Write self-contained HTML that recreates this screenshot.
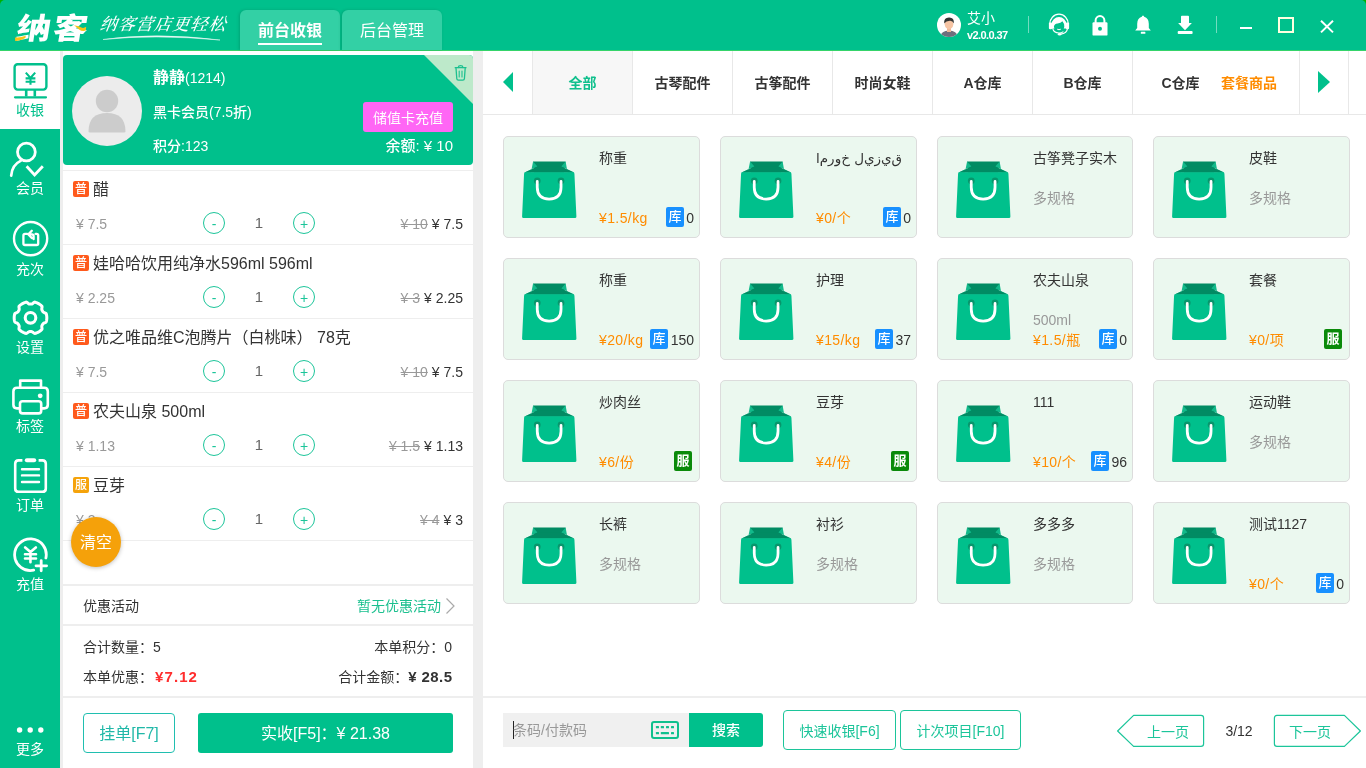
<!DOCTYPE html>
<html lang="zh-CN">
<head>
<meta charset="utf-8">
<title>纳客 前台收银</title>
<style>
*{box-sizing:border-box;margin:0;padding:0}
html,body{width:1366px;height:768px;overflow:hidden}
html{background:#eee}
body{position:relative;background:#eee;font-family:"Liberation Sans","Noto Sans CJK SC",sans-serif;font-size:14px;color:#333;line-height:1}
#root{position:absolute;left:0;top:0;width:1366px;height:768px;will-change:transform}
.abs{position:absolute}
.t{position:absolute;white-space:nowrap;line-height:20px;height:20px}
/* header */
#hdr{position:absolute;left:0;top:0;width:1366px;height:51px;background:#00c08c;border-bottom:1px solid #35d46a;border-radius:5px 5px 0 0}
.htab{position:absolute;top:10px;width:100px;height:40px;background:#33d0a5;border-radius:6px 6px 0 0;box-shadow:-1px 0 3px rgba(0,70,45,.22);color:#fff;font-size:16px;text-align:center;line-height:42px}
/* sidebar */
#side{position:absolute;left:0;top:51px;width:60px;height:717px;background:#00c08c}
.sitem{position:absolute;left:0;width:60px;height:79px;color:#fff;text-align:center}
.sitem .lb{position:absolute;left:0;width:60px;text-align:center;font-size:14px;line-height:20px;top:49px}
.sitem svg{position:absolute;left:0;top:0}
/* left panel */
#lp{position:absolute;left:63px;top:51px;width:410px;height:717px;background:#fff}
#card{position:absolute;left:0;top:4px;width:410px;height:110px;background:#00c08c;border-radius:4px;color:#fff;overflow:hidden}
.row{position:absolute;left:0;width:410px;height:74px;border-top:1px solid #eee}
.badge{position:absolute;left:10px;top:10px;width:16px;height:16px;border-radius:2px;background:#ff5a1c;color:#fff;font-size:12px;line-height:16px;text-align:center;font-weight:500}
.rname{position:absolute;left:30px;top:8px;font-size:16px;line-height:22px;white-space:nowrap;color:#333}
.rp{position:absolute;left:13px;top:43px;font-size:14px;line-height:20px;color:#999;white-space:nowrap}
.circ{position:absolute;top:41px;width:22px;height:22px;border:1px solid #1cc59a;border-radius:50%;color:#1cc59a;text-align:center;line-height:22px;font-size:14px}
.qty{position:absolute;left:185px;width:22px;text-align:center;top:41px;font-size:15px;line-height:21px;color:#666}
.rr{position:absolute;right:10px;top:43px;font-size:14px;line-height:20px;color:#333;white-space:nowrap}
.rr s{color:#999;margin-right:4px}
.sep{position:absolute;left:0;width:410px;height:2px;background:#eee}
/* right panel */
#rp{position:absolute;left:483px;top:51px;width:883px;height:717px;background:#fff}
.ctab{position:absolute;top:0;height:63px;width:100px;border-left:1px solid #e8e8e8;text-align:center;line-height:65px;font-size:14px;font-weight:bold;color:#333}
.pc{position:absolute;width:197px;height:102px;background:#ebf8ef;border:1px solid #dcdcdc;border-radius:5px}
.pc svg{position:absolute;left:16.2px;top:22.6px;width:57.5px;height:59.5px}
.pc .n{position:absolute;left:95px;top:11px;font-size:14px;line-height:20px;color:#333;white-space:nowrap}
.pc .s{position:absolute;left:95px;top:51px;font-size:14px;line-height:20px;color:#999;white-space:nowrap}
.pc .p{position:absolute;left:95px;top:71px;font-size:14px;line-height:20px;color:#ff8c00;white-space:nowrap;letter-spacing:.4px}
.pc .k{position:absolute;top:70px;height:20px;width:18px;border-radius:2px;background:#1890ff;color:#fff;font-size:13px;line-height:20px;text-align:center;font-weight:500}
.pc .kn{position:absolute;top:71px;font-size:14px;line-height:20px;color:#333;white-space:nowrap}
.pc .f{position:absolute;left:170px;top:70px;height:20px;width:18px;border-radius:2px;background:#0a8a0a;color:#fff;font-size:13px;line-height:20px;text-align:center;font-weight:bold}
.btn{position:absolute;border:1px solid #1cc59a;border-radius:4px;color:#1cc59a;text-align:center;background:#fff;white-space:nowrap}
</style>
</head>
<body>
<div id="root">
<!-- HEADER -->
<div class="abs" style="left:0;top:0;width:1366px;height:8px;background:#00b000"></div>
<div id="hdr">
<div class="abs" id="logo" style="left:14px;top:7px;font-size:33px;line-height:40px;font-weight:900;color:#fff;transform:skewX(-9deg) scale(1.04,.9);transform-origin:0 100%;letter-spacing:2px;white-space:nowrap">纳客</div>
<svg class="abs" style="left:12px;top:20px" width="80" height="24" viewBox="0 0 80 24"><path d="M3 17.4 Q8 18 13.8 15.8 L13.4 18 Q8 21.2 3.2 20.9 Z" fill="#f9c417"/><path d="M62 5.2 Q67 5.8 70 7.8 Q72 8.4 74.2 6.8 L73.8 10.6 Q70 11.6 67 9.4 Q65 7.4 62 5.2 Z" fill="#f9c417"/></svg>
<div class="abs" id="slogan" style="left:100px;top:14px;font-family:'Liberation Serif','Noto Serif CJK SC',serif;font-size:17px;line-height:22px;color:#fff;letter-spacing:1.1px;font-style:italic;font-weight:500;white-space:nowrap;transform:skewX(-8deg);transform-origin:0 50%">纳客营店更轻松</div>
<svg class="abs" style="left:100px;top:33px" width="130" height="10" viewBox="0 0 130 10"><path d="M3 6.5 Q55 -1 120 7 Q55 1.2 3 6.5 Z" fill="#fff" stroke="#fff" stroke-width=".5" opacity=".9"/></svg>
<div class="htab" style="left:240px;font-weight:bold">前台收银<i class="abs" style="left:18px;top:33px;width:64px;height:2px;background:#fff"></i></div>
<div class="htab" style="left:342px">后台管理</div>
<svg class="abs" style="left:937px;top:13px" width="24" height="24" viewBox="0 0 24 24"><defs><clipPath id="avc"><circle cx="12" cy="12" r="12"/></clipPath></defs><circle cx="12" cy="12" r="12" fill="#fff"/><g clip-path="url(#avc)"><path d="M3 26 Q3 17.5 12 17.5 Q21 17.5 21 26 Z" fill="#6f6f7d"/><rect x="10" y="14" width="4" height="5" fill="#f0b99a"/><ellipse cx="12" cy="11.2" rx="4.3" ry="5" fill="#f6c4a4"/><path d="M7.2 10.5 Q6.5 4.3 12.3 4.5 Q17.5 4.6 16.8 10.5 Q15.5 7.5 12.8 7.8 Q9 8 7.2 10.5 Z" fill="#333"/></g></svg>
<div class="t" style="left:967px;top:8px;font-size:14px;color:#fff">艾小</div>
<div class="t" style="left:967px;top:25px;font-size:11px;font-weight:bold;color:#fff;letter-spacing:-.6px">v2.0.0.37</div>
<i class="abs" style="left:1028px;top:16px;width:1px;height:17px;background:rgba(255,255,255,.45)"></i>
<svg class="abs" style="left:1047px;top:13px" width="24" height="24" viewBox="0 0 24 24" fill="none" stroke="#fff"><path d="M2.6 11.6 A9.4 10.4 0 0 1 21.4 11.6" stroke-width="1.2"/><path d="M4.6 15.4 V11.4 A7.4 7.4 0 0 1 19.4 11.4 V15.4 Z" fill="#fff" stroke="none"/><rect x="1.9" y="9.4" width="3.2" height="6.8" rx="1.2" fill="#fff" stroke="none"/><rect x="18.9" y="9.4" width="3.2" height="6.8" rx="1.2" fill="#fff" stroke="none"/><path d="M6.9 13.6 Q7.2 10.9 10.6 10.5 Q13.8 10.2 15.4 8.3 Q17.5 10.6 17.3 13.8 Q16.6 18.7 12 18.7 Q7.4 18.7 6.9 13.6 Z" fill="#00c08c" stroke="none"/><path d="M5.6 15.2 Q6.6 20 12 20 Q14.6 20 16.4 18.6" stroke-width="1.1"/><path d="M20.4 15.8 Q20 20.3 13.6 21.2" stroke-width="1.2"/><ellipse cx="12.6" cy="21.3" rx="1.8" ry="1.25" fill="#fff" stroke="none"/><path d="M10.2 16.2 Q12 17.3 13.8 16.2" stroke-width="1"/></svg>
<svg class="abs" style="left:1090px;top:14px" width="20" height="24" viewBox="0 0 20 24"><path d="M5.6 10 V6.6 A4.4 4.6 0 0 1 14.4 6.6 V10" fill="none" stroke="#fff" stroke-width="2"/><rect x="2.5" y="8.2" width="15" height="13.4" rx="1.2" fill="#fff"/><circle cx="10" cy="14.8" r="2" fill="#00c08c"/></svg>
<svg class="abs" style="left:1132.2px;top:14px" width="22" height="22" viewBox="0 0 22 22"><path d="M11 1.6 Q10 1.8 9.8 2.8 Q5.2 4.2 5.2 9.8 V14 L3.2 16.6 H18.8 L16.8 14 V9.8 Q16.8 4.2 12.2 2.8 Q12 1.8 11 1.6 Z" fill="#fff"/><rect x="8.8" y="17.8" width="4.6" height="2" rx=".6" fill="#fff"/></svg>
<svg class="abs" style="left:1175px;top:14px" width="20" height="22" viewBox="0 0 20 22"><path d="M6.9 1.8 H13.1 Q14 1.8 14 2.7 V8.9 H16.9 L10 16.3 L3.1 8.9 H6 V2.7 Q6 1.8 6.9 1.8 Z" fill="#fff"/><rect x="2.7" y="17.1" width="14.9" height="2.9" rx=".9" fill="#fff"/></svg>
<i class="abs" style="left:1216px;top:16px;width:1px;height:17px;background:rgba(255,255,255,.45)"></i>
<i class="abs" style="left:1240px;top:27px;width:12px;height:2px;background:#fff"></i>
<i class="abs" style="left:1278px;top:17px;width:16px;height:16px;border:2px solid #ffffe0"></i>
<svg class="abs" style="left:1319px;top:19px" width="16" height="16" viewBox="0 0 16 16"><path d="M2 1.8 L14 13.4 M14 1.8 L2 13.4" stroke="#fff" stroke-width="2" fill="none"/></svg>
</div>
<!-- SIDEBAR -->
<div id="side">
<div class="sitem" style="top:0;background:#fff;color:#00c08c;height:78px">
<svg width="60" height="50" viewBox="0 0 60 50" fill="none" stroke="#00c08c" stroke-width="2.4"><rect x="14.6" y="13.2" width="31.8" height="25.4" rx="3"/><path d="M26.2 39 V45.5 M34.8 39 V45.5" stroke-width="2.6"/><path d="M15 46.3 H46" stroke-width="2.2" stroke-linecap="round"/><path d="M25.8 21.6 L30.5 27 L35.2 21.6 M30.5 27 V33.8 M25.6 27.4 H35.4 M25.6 30.8 H35.4" stroke-width="2.1"/></svg>
<div class="lb">收银</div></div>
<div class="sitem" style="top:78px">
<svg width="60" height="56" viewBox="0 0 60 56" fill="none" stroke="#fff" stroke-width="2.4" stroke-linecap="round" stroke-linejoin="round"><circle cx="26.4" cy="23" r="8.9" stroke-width="2.8"/><path d="M11.2 46.6 Q12 35.8 21 31.6" stroke-width="2.7"/><path d="M26.6 37.2 L34.6 46 L42.8 37.2" stroke-width="2.8" stroke-linecap="butt" stroke-linejoin="miter"/></svg>
<div class="lb" style="top:49px">会员</div></div>
<div class="sitem" style="top:157px">
<svg width="60" height="56" viewBox="0 0 60 56" fill="none" stroke="#fff" stroke-width="2.4" stroke-linecap="round" stroke-linejoin="round"><circle cx="30.6" cy="30.6" r="16.6"/><path d="M27.2 25.8 H25 Q23.4 25.8 23.4 27.4 V35.4 Q23.4 37 25 37 H36.6 Q38.2 37 38.2 35.4 V27.4 Q38.2 25.8 36.6 25.8 H35.6 M31.8 22.8 L28.4 26.4 L31.8 30 M28.8 26.4 H32 Q33.6 26.4 33.6 28 V31.2" stroke-width="2.3"/></svg>
<div class="lb" style="top:51px">充次</div></div>
<div class="sitem" style="top:236px">
<svg width="60" height="56" viewBox="0 0 60 56" fill="none" stroke="#fff" stroke-width="2.8" stroke-linejoin="round"><circle cx="30.5" cy="30.8" r="5.3" stroke-width="3.1"/><path d="M46.8 30.8 L46.8 31.7 L46.7 32.5 L46.6 33.3 L46.4 34.2 L46.2 35.0 L45.2 35.6 L44.1 36.0 L43.3 36.5 L42.8 37.1 L42.5 37.7 L42.1 38.3 L41.8 39.0 L41.8 40.0 L42.0 41.2 L42.0 42.3 L41.4 42.9 L40.8 43.5 L40.1 44.0 L39.4 44.5 L38.7 44.9 L37.9 45.3 L37.1 45.7 L36.3 46.0 L35.5 46.3 L34.7 46.5 L33.7 46.0 L32.8 45.2 L32.0 44.7 L31.2 44.6 L30.5 44.6 L29.8 44.6 L29.0 44.7 L28.2 45.2 L27.3 46.0 L26.3 46.5 L25.5 46.3 L24.7 46.0 L23.9 45.7 L23.1 45.3 L22.4 44.9 L21.6 44.5 L20.9 44.0 L20.2 43.5 L19.6 42.9 L19.0 42.3 L19.0 41.2 L19.2 40.0 L19.2 39.0 L18.9 38.3 L18.5 37.7 L18.2 37.1 L17.7 36.5 L16.9 36.0 L15.8 35.6 L14.8 35.0 L14.6 34.2 L14.4 33.3 L14.3 32.5 L14.2 31.7 L14.2 30.8 L14.2 29.9 L14.3 29.1 L14.4 28.3 L14.6 27.4 L14.8 26.6 L15.8 26.0 L16.9 25.6 L17.7 25.1 L18.2 24.5 L18.5 23.9 L18.9 23.3 L19.2 22.6 L19.2 21.6 L19.0 20.4 L19.0 19.3 L19.6 18.7 L20.2 18.1 L20.9 17.6 L21.6 17.1 L22.3 16.7 L23.1 16.3 L23.9 15.9 L24.7 15.6 L25.5 15.3 L26.3 15.1 L27.3 15.6 L28.2 16.4 L29.0 16.9 L29.8 17.0 L30.5 17.0 L31.2 17.0 L32.0 16.9 L32.8 16.4 L33.7 15.6 L34.7 15.1 L35.5 15.3 L36.3 15.6 L37.1 15.9 L37.9 16.3 L38.7 16.7 L39.4 17.1 L40.1 17.6 L40.8 18.1 L41.4 18.7 L42.0 19.3 L42.0 20.4 L41.8 21.6 L41.8 22.6 L42.1 23.3 L42.5 23.9 L42.8 24.5 L43.3 25.1 L44.1 25.6 L45.2 26.0 L46.2 26.6 L46.4 27.4 L46.6 28.3 L46.7 29.1 L46.8 29.9 Z" stroke-width="3"/></svg>
<div class="lb" style="top:50px">设置</div></div>
<div class="sitem" style="top:315px">
<svg width="60" height="56" viewBox="0 0 60 56" fill="none" stroke="#fff" stroke-width="2.6" stroke-linejoin="round"><path d="M20.2 21.6 V14.6 H41 V21.6"/><path d="M19.6 42.4 H17 Q13.4 42.4 13.4 38.8 V25.4 Q13.4 21.8 17 21.8 H44.2 Q47.8 21.8 47.8 25.4 V38.8 Q47.8 42.4 44.2 42.4 H41.6"/><rect x="20" y="35.2" width="21.2" height="12.2" rx="2.6"/><circle cx="40.2" cy="29.8" r="2.4" fill="#fff" stroke="none"/></svg>
<div class="lb" style="top:50px">标签</div></div>
<div class="sitem" style="top:394px">
<svg width="60" height="56" viewBox="0 0 60 56" fill="none" stroke="#fff" stroke-width="2.6" stroke-linecap="round"><path d="M22.4 15.4 H18.6 Q15.2 15.4 15.2 18.8 V43.4 Q15.2 46.8 18.6 46.8 H42.4 Q45.8 46.8 45.8 43.4 V18.8 Q45.8 15.4 42.4 15.4 H38.6" stroke-linecap="butt"/><path d="M26.8 15.2 H34.2" stroke-width="4"/><path d="M22 24.2 H39 M22 30.4 H39 M22 37 H39" stroke-width="2.4" stroke-linecap="round"/></svg>
<div class="lb" style="top:50px">订单</div></div>
<div class="sitem" style="top:473px">
<svg width="60" height="56" viewBox="0 0 60 56" fill="none" stroke="#fff" stroke-width="2.4" stroke-linecap="round"><path d="M45.9 34 A15.8 15.8 0 1 0 33.7 46.2" stroke-width="2.8"/><path d="M25.2 23.4 L30.45 28 L35.8 23.4 M30.45 28 V38.2 M25 30.3 H36 M25 34.5 H36" stroke-width="2.6"/><path d="M41.2 36.6 V46.8 M36 41.8 H46.6" stroke-width="2.8"/></svg>
<div class="lb" style="top:50px">充值</div></div>
<div class="sitem" style="top:660px;height:57px">
<svg width="60" height="30" viewBox="0 0 60 30"><circle cx="19.6" cy="19" r="2.7" fill="#fff"/><circle cx="30.2" cy="19" r="2.7" fill="#fff"/><circle cx="40.8" cy="19" r="2.7" fill="#fff"/></svg>
<div class="lb" style="top:28px">更多</div></div>
</div>
<!-- LEFT PANEL -->
<div id="lp">
<div id="card">
<svg class="abs" style="left:9px;top:21px" width="70" height="70" viewBox="0 0 70 70"><defs><clipPath id="mc"><circle cx="35" cy="35" r="35"/></clipPath></defs><circle cx="35" cy="35" r="35" fill="#ececec"/><circle cx="35" cy="25" r="11.2" fill="#ccc"/><path d="M16.5 55.5 Q16.5 37 35 37 Q53.5 37 53.5 55.5 Q53.5 56.5 52 56.5 H18 Q16.5 56.5 16.5 55.5 Z" fill="#ccc"/></svg>
<div class="t" style="left:90px;top:12px;font-size:14px;line-height:22px;height:22px"><b style="font-size:16px">静静</b>(1214)</div>
<div class="t" style="left:90px;top:47px;font-size:14px;font-weight:500">黑卡会员(7.5折)</div>
<div class="t" style="left:90px;top:81px;font-size:14px;font-weight:500">积分:123</div>
<svg class="abs" style="left:361px;top:0" width="49" height="49" viewBox="0 0 49 49"><path d="M0 0 H49 V49 Z" fill="#bde9ca"/><g transform="translate(.6,1.5)" fill="none" stroke="#1cc08f" stroke-width="1.3" stroke-linecap="round"><path d="M30.6 11.2 H41.4"/><path d="M33.6 11 Q33.8 9.2 36 9.2 Q38.2 9.2 38.4 11"/><path d="M31.4 11.6 L32.2 22.2 Q32.3 23.6 33.8 23.6 H38.2 Q39.7 23.6 39.8 22.2 L40.6 11.6"/><path d="M34.6 14.6 V20.4 M37.4 14.6 V20.4" stroke-width="1.1"/></g></svg>
<div class="abs" style="left:300px;top:47px;width:90px;height:30px;background:#ff66f5;border-radius:3px;color:#fff;font-size:14px;line-height:32px;text-align:center">储值卡充值</div>
<div class="t" style="right:20px;top:81px;font-size:15px;font-weight:500">余额: ¥ 10</div>
</div>
<div class="row" style="top:119px"><span class="badge" style="background:#ff5a1c">普</span><span class="rname">醋</span><span class="rp">¥ 7.5</span><span class="circ" style="left:140px">-</span><span class="qty">1</span><span class="circ" style="left:230px">+</span><span class="rr"><s>¥ 10</s>¥ 7.5</span></div>
<div class="row" style="top:193px"><span class="badge" style="background:#ff5a1c">普</span><span class="rname">娃哈哈饮用纯净水596ml 596ml</span><span class="rp">¥ 2.25</span><span class="circ" style="left:140px">-</span><span class="qty">1</span><span class="circ" style="left:230px">+</span><span class="rr"><s>¥ 3</s>¥ 2.25</span></div>
<div class="row" style="top:267px"><span class="badge" style="background:#ff5a1c">普</span><span class="rname">优之唯品维C泡腾片（白桃味） 78克</span><span class="rp">¥ 7.5</span><span class="circ" style="left:140px">-</span><span class="qty">1</span><span class="circ" style="left:230px">+</span><span class="rr"><s>¥ 10</s>¥ 7.5</span></div>
<div class="row" style="top:341px"><span class="badge" style="background:#ff5a1c">普</span><span class="rname">农夫山泉 500ml</span><span class="rp">¥ 1.13</span><span class="circ" style="left:140px">-</span><span class="qty">1</span><span class="circ" style="left:230px">+</span><span class="rr"><s>¥ 1.5</s>¥ 1.13</span></div>
<div class="row" style="top:415px"><span class="badge" style="background:#f5a30b">服</span><span class="rname">豆芽</span><span class="rp">¥ 3</span><span class="circ" style="left:140px">-</span><span class="qty">1</span><span class="circ" style="left:230px">+</span><span class="rr"><s>¥ 4</s>¥ 3</span></div>
<div class="row" style="top:489px;height:1px"></div>
<div class="abs" style="left:8px;top:466px;width:50px;height:50px;border-radius:50%;background:#f5a10a;color:#fff;font-size:16px;line-height:52px;text-align:center;box-shadow:0 1px 4px rgba(0,0,0,.25)">清空</div>
<div class="sep" style="top:533px"></div>
<div class="t" style="left:20px;top:545px">优惠活动</div>
<div class="t" style="right:32px;top:545px;color:#1cc08f">暂无优惠活动</div>
<svg class="abs" style="left:381px;top:546px" width="12" height="18" viewBox="0 0 12 18"><path d="M2.5 1.5 L10 9 L2.5 16.5" fill="none" stroke="#aaa" stroke-width="1.2"/></svg>
<div class="sep" style="top:573px"></div>
<div class="t" style="left:20px;top:586px">合计数量：5</div>
<div class="t" style="right:21px;top:586px">本单积分：0</div>
<div class="t" style="left:20px;top:616px">本单优惠：<b style="color:#ff2e2e;font-size:15px;letter-spacing:1.1px;margin-left:2px">¥7.12</b></div>
<div class="t" style="right:21px;top:616px">合计金额：<b style="font-size:15px;letter-spacing:.4px;margin-right:-.4px">¥ 28.5</b></div>
<div class="sep" style="top:645px"></div>
<div class="btn" style="left:20px;top:662px;width:92px;height:40px;font-size:16px;line-height:40px;border-color:#20bfb0;color:#20b8a8">挂单[F7]</div>
<div class="abs" style="left:135px;top:662px;width:255px;height:40px;border-radius:3px;background:#00c08c;color:#fff;font-size:16px;line-height:42px;text-align:center">实收[F5]：¥ 21.38</div>
</div>
<!-- RIGHT PANEL -->
<div id="rp">
<svg class="abs" style="left:20px;top:20px" width="10" height="22" viewBox="0 0 10 22"><path d="M10 1 V21 L0 11 Z" fill="#00c08c"/></svg>
<div class="abs" style="left:0;top:63px;width:883px;height:1px;background:#e8e8e8"></div>
<div class="ctab" style="left:49px;background:#f7f7f7;color:#10c08d;">全部</div>
<div class="ctab" style="left:149px;">古琴配件</div>
<div class="ctab" style="left:249px;">古筝配件</div>
<div class="ctab" style="left:349px;">时尚女鞋</div>
<div class="ctab" style="left:449px;">A仓库</div>
<div class="ctab" style="left:549px;">B仓库</div>
<div class="ctab" style="left:649px;padding-right:4px;">C仓库</div>
<div class="abs" style="left:734px;top:0;width:82px;height:63px;background:#fff;text-align:left;line-height:65px;font-size:14px;font-weight:bold;color:#ff8c00;padding-left:4px">套餐商品</div>
<div class="abs" style="left:816px;top:0;width:1px;height:63px;background:#e8e8e8"></div>
<div class="abs" style="left:865px;top:0;width:1px;height:63px;background:#e8e8e8"></div>
<svg class="abs" style="left:835px;top:20px" width="12" height="22" viewBox="0 0 12 22"><path d="M0 0 V22 L12 11 Z" fill="#00c08c"/></svg>
<div class="pc" style="left:20px;top:85px"><svg width="58" height="60" viewBox="0 0 58 60"><path d="M13.2 1.4 H46 L44.2 12.6 H14.2 Z" fill="#018b63"/><path d="M13.2 1.4 L17.6 6.6 L4.4 12.6 H11 Z" fill="#12b98a"/><path d="M46 1.4 L41.6 6.6 L54.8 12.6 H48 Z" fill="#12b98a"/><path d="M17.6 6.6 L4.4 12.8 H54.8 L41.6 6.6 Z" fill="#018b63"/><path d="M5.6 12.4 H53.4 Q54.8 12.4 54.9 13.8 L56.9 57 Q57 58.6 55.4 58.6 H3.6 Q2 58.6 2.1 57 L4.1 13.8 Q4.2 12.4 5.6 12.4 Z" fill="#00c08c"/><circle cx="17.4" cy="21" r="3.4" fill="#07966c"/><circle cx="41.4" cy="21" r="3.4" fill="#07966c"/><path d="M17.4 21.6 V27.6 Q17.4 39.4 29.4 39.4 Q41.4 39.4 41.4 27.6 V21.6" fill="none" stroke="#fff" stroke-width="2.8" stroke-linecap="round"/></svg><span class="n">称重</span><span class="p">¥1.5/kg</span><span class="kn" style="right:5px">0</span><span class="k" style="right:15px">库</span></div>
<div class="pc" style="left:237px;top:85px"><svg width="58" height="60" viewBox="0 0 58 60"><path d="M13.2 1.4 H46 L44.2 12.6 H14.2 Z" fill="#018b63"/><path d="M13.2 1.4 L17.6 6.6 L4.4 12.6 H11 Z" fill="#12b98a"/><path d="M46 1.4 L41.6 6.6 L54.8 12.6 H48 Z" fill="#12b98a"/><path d="M17.6 6.6 L4.4 12.8 H54.8 L41.6 6.6 Z" fill="#018b63"/><path d="M5.6 12.4 H53.4 Q54.8 12.4 54.9 13.8 L56.9 57 Q57 58.6 55.4 58.6 H3.6 Q2 58.6 2.1 57 L4.1 13.8 Q4.2 12.4 5.6 12.4 Z" fill="#00c08c"/><circle cx="17.4" cy="21" r="3.4" fill="#07966c"/><circle cx="41.4" cy="21" r="3.4" fill="#07966c"/><path d="M17.4 21.6 V27.6 Q17.4 39.4 29.4 39.4 Q41.4 39.4 41.4 27.6 V21.6" fill="none" stroke="#fff" stroke-width="2.8" stroke-linecap="round"/></svg><span class="n"><span dir="rtl" lang="ug" style="font-family:'DejaVu Sans','Liberation Sans',sans-serif;font-size:13.5px">ق‌ي‌ز‌ي‌ل خ‌و‌ر‌م‌ا</span></span><span class="p">¥0/个</span><span class="kn" style="right:5px">0</span><span class="k" style="right:15px">库</span></div>
<div class="pc" style="left:454px;top:85px;width:196px"><svg width="58" height="60" viewBox="0 0 58 60"><path d="M13.2 1.4 H46 L44.2 12.6 H14.2 Z" fill="#018b63"/><path d="M13.2 1.4 L17.6 6.6 L4.4 12.6 H11 Z" fill="#12b98a"/><path d="M46 1.4 L41.6 6.6 L54.8 12.6 H48 Z" fill="#12b98a"/><path d="M17.6 6.6 L4.4 12.8 H54.8 L41.6 6.6 Z" fill="#018b63"/><path d="M5.6 12.4 H53.4 Q54.8 12.4 54.9 13.8 L56.9 57 Q57 58.6 55.4 58.6 H3.6 Q2 58.6 2.1 57 L4.1 13.8 Q4.2 12.4 5.6 12.4 Z" fill="#00c08c"/><circle cx="17.4" cy="21" r="3.4" fill="#07966c"/><circle cx="41.4" cy="21" r="3.4" fill="#07966c"/><path d="M17.4 21.6 V27.6 Q17.4 39.4 29.4 39.4 Q41.4 39.4 41.4 27.6 V21.6" fill="none" stroke="#fff" stroke-width="2.8" stroke-linecap="round"/></svg><span class="n">古筝凳子实木</span><span class="s">多规格</span></div>
<div class="pc" style="left:670px;top:85px"><svg width="58" height="60" viewBox="0 0 58 60"><path d="M13.2 1.4 H46 L44.2 12.6 H14.2 Z" fill="#018b63"/><path d="M13.2 1.4 L17.6 6.6 L4.4 12.6 H11 Z" fill="#12b98a"/><path d="M46 1.4 L41.6 6.6 L54.8 12.6 H48 Z" fill="#12b98a"/><path d="M17.6 6.6 L4.4 12.8 H54.8 L41.6 6.6 Z" fill="#018b63"/><path d="M5.6 12.4 H53.4 Q54.8 12.4 54.9 13.8 L56.9 57 Q57 58.6 55.4 58.6 H3.6 Q2 58.6 2.1 57 L4.1 13.8 Q4.2 12.4 5.6 12.4 Z" fill="#00c08c"/><circle cx="17.4" cy="21" r="3.4" fill="#07966c"/><circle cx="41.4" cy="21" r="3.4" fill="#07966c"/><path d="M17.4 21.6 V27.6 Q17.4 39.4 29.4 39.4 Q41.4 39.4 41.4 27.6 V21.6" fill="none" stroke="#fff" stroke-width="2.8" stroke-linecap="round"/></svg><span class="n">皮鞋</span><span class="s">多规格</span></div>
<div class="pc" style="left:20px;top:207px"><svg width="58" height="60" viewBox="0 0 58 60"><path d="M13.2 1.4 H46 L44.2 12.6 H14.2 Z" fill="#018b63"/><path d="M13.2 1.4 L17.6 6.6 L4.4 12.6 H11 Z" fill="#12b98a"/><path d="M46 1.4 L41.6 6.6 L54.8 12.6 H48 Z" fill="#12b98a"/><path d="M17.6 6.6 L4.4 12.8 H54.8 L41.6 6.6 Z" fill="#018b63"/><path d="M5.6 12.4 H53.4 Q54.8 12.4 54.9 13.8 L56.9 57 Q57 58.6 55.4 58.6 H3.6 Q2 58.6 2.1 57 L4.1 13.8 Q4.2 12.4 5.6 12.4 Z" fill="#00c08c"/><circle cx="17.4" cy="21" r="3.4" fill="#07966c"/><circle cx="41.4" cy="21" r="3.4" fill="#07966c"/><path d="M17.4 21.6 V27.6 Q17.4 39.4 29.4 39.4 Q41.4 39.4 41.4 27.6 V21.6" fill="none" stroke="#fff" stroke-width="2.8" stroke-linecap="round"/></svg><span class="n">称重</span><span class="p">¥20/kg</span><span class="kn" style="right:5px">150</span><span class="k" style="right:31px">库</span></div>
<div class="pc" style="left:237px;top:207px"><svg width="58" height="60" viewBox="0 0 58 60"><path d="M13.2 1.4 H46 L44.2 12.6 H14.2 Z" fill="#018b63"/><path d="M13.2 1.4 L17.6 6.6 L4.4 12.6 H11 Z" fill="#12b98a"/><path d="M46 1.4 L41.6 6.6 L54.8 12.6 H48 Z" fill="#12b98a"/><path d="M17.6 6.6 L4.4 12.8 H54.8 L41.6 6.6 Z" fill="#018b63"/><path d="M5.6 12.4 H53.4 Q54.8 12.4 54.9 13.8 L56.9 57 Q57 58.6 55.4 58.6 H3.6 Q2 58.6 2.1 57 L4.1 13.8 Q4.2 12.4 5.6 12.4 Z" fill="#00c08c"/><circle cx="17.4" cy="21" r="3.4" fill="#07966c"/><circle cx="41.4" cy="21" r="3.4" fill="#07966c"/><path d="M17.4 21.6 V27.6 Q17.4 39.4 29.4 39.4 Q41.4 39.4 41.4 27.6 V21.6" fill="none" stroke="#fff" stroke-width="2.8" stroke-linecap="round"/></svg><span class="n">护理</span><span class="p">¥15/kg</span><span class="kn" style="right:5px">37</span><span class="k" style="right:23px">库</span></div>
<div class="pc" style="left:454px;top:207px;width:196px"><svg width="58" height="60" viewBox="0 0 58 60"><path d="M13.2 1.4 H46 L44.2 12.6 H14.2 Z" fill="#018b63"/><path d="M13.2 1.4 L17.6 6.6 L4.4 12.6 H11 Z" fill="#12b98a"/><path d="M46 1.4 L41.6 6.6 L54.8 12.6 H48 Z" fill="#12b98a"/><path d="M17.6 6.6 L4.4 12.8 H54.8 L41.6 6.6 Z" fill="#018b63"/><path d="M5.6 12.4 H53.4 Q54.8 12.4 54.9 13.8 L56.9 57 Q57 58.6 55.4 58.6 H3.6 Q2 58.6 2.1 57 L4.1 13.8 Q4.2 12.4 5.6 12.4 Z" fill="#00c08c"/><circle cx="17.4" cy="21" r="3.4" fill="#07966c"/><circle cx="41.4" cy="21" r="3.4" fill="#07966c"/><path d="M17.4 21.6 V27.6 Q17.4 39.4 29.4 39.4 Q41.4 39.4 41.4 27.6 V21.6" fill="none" stroke="#fff" stroke-width="2.8" stroke-linecap="round"/></svg><span class="n">农夫山泉</span><span class="s">500ml</span><span class="p">¥1.5/瓶</span><span class="kn" style="right:5px">0</span><span class="k" style="right:15px">库</span></div>
<div class="pc" style="left:670px;top:207px"><svg width="58" height="60" viewBox="0 0 58 60"><path d="M13.2 1.4 H46 L44.2 12.6 H14.2 Z" fill="#018b63"/><path d="M13.2 1.4 L17.6 6.6 L4.4 12.6 H11 Z" fill="#12b98a"/><path d="M46 1.4 L41.6 6.6 L54.8 12.6 H48 Z" fill="#12b98a"/><path d="M17.6 6.6 L4.4 12.8 H54.8 L41.6 6.6 Z" fill="#018b63"/><path d="M5.6 12.4 H53.4 Q54.8 12.4 54.9 13.8 L56.9 57 Q57 58.6 55.4 58.6 H3.6 Q2 58.6 2.1 57 L4.1 13.8 Q4.2 12.4 5.6 12.4 Z" fill="#00c08c"/><circle cx="17.4" cy="21" r="3.4" fill="#07966c"/><circle cx="41.4" cy="21" r="3.4" fill="#07966c"/><path d="M17.4 21.6 V27.6 Q17.4 39.4 29.4 39.4 Q41.4 39.4 41.4 27.6 V21.6" fill="none" stroke="#fff" stroke-width="2.8" stroke-linecap="round"/></svg><span class="n">套餐</span><span class="p">¥0/项</span><span class="f">服</span></div>
<div class="pc" style="left:20px;top:329px"><svg width="58" height="60" viewBox="0 0 58 60"><path d="M13.2 1.4 H46 L44.2 12.6 H14.2 Z" fill="#018b63"/><path d="M13.2 1.4 L17.6 6.6 L4.4 12.6 H11 Z" fill="#12b98a"/><path d="M46 1.4 L41.6 6.6 L54.8 12.6 H48 Z" fill="#12b98a"/><path d="M17.6 6.6 L4.4 12.8 H54.8 L41.6 6.6 Z" fill="#018b63"/><path d="M5.6 12.4 H53.4 Q54.8 12.4 54.9 13.8 L56.9 57 Q57 58.6 55.4 58.6 H3.6 Q2 58.6 2.1 57 L4.1 13.8 Q4.2 12.4 5.6 12.4 Z" fill="#00c08c"/><circle cx="17.4" cy="21" r="3.4" fill="#07966c"/><circle cx="41.4" cy="21" r="3.4" fill="#07966c"/><path d="M17.4 21.6 V27.6 Q17.4 39.4 29.4 39.4 Q41.4 39.4 41.4 27.6 V21.6" fill="none" stroke="#fff" stroke-width="2.8" stroke-linecap="round"/></svg><span class="n">炒肉丝</span><span class="p">¥6/份</span><span class="f">服</span></div>
<div class="pc" style="left:237px;top:329px"><svg width="58" height="60" viewBox="0 0 58 60"><path d="M13.2 1.4 H46 L44.2 12.6 H14.2 Z" fill="#018b63"/><path d="M13.2 1.4 L17.6 6.6 L4.4 12.6 H11 Z" fill="#12b98a"/><path d="M46 1.4 L41.6 6.6 L54.8 12.6 H48 Z" fill="#12b98a"/><path d="M17.6 6.6 L4.4 12.8 H54.8 L41.6 6.6 Z" fill="#018b63"/><path d="M5.6 12.4 H53.4 Q54.8 12.4 54.9 13.8 L56.9 57 Q57 58.6 55.4 58.6 H3.6 Q2 58.6 2.1 57 L4.1 13.8 Q4.2 12.4 5.6 12.4 Z" fill="#00c08c"/><circle cx="17.4" cy="21" r="3.4" fill="#07966c"/><circle cx="41.4" cy="21" r="3.4" fill="#07966c"/><path d="M17.4 21.6 V27.6 Q17.4 39.4 29.4 39.4 Q41.4 39.4 41.4 27.6 V21.6" fill="none" stroke="#fff" stroke-width="2.8" stroke-linecap="round"/></svg><span class="n">豆芽</span><span class="p">¥4/份</span><span class="f">服</span></div>
<div class="pc" style="left:454px;top:329px;width:196px"><svg width="58" height="60" viewBox="0 0 58 60"><path d="M13.2 1.4 H46 L44.2 12.6 H14.2 Z" fill="#018b63"/><path d="M13.2 1.4 L17.6 6.6 L4.4 12.6 H11 Z" fill="#12b98a"/><path d="M46 1.4 L41.6 6.6 L54.8 12.6 H48 Z" fill="#12b98a"/><path d="M17.6 6.6 L4.4 12.8 H54.8 L41.6 6.6 Z" fill="#018b63"/><path d="M5.6 12.4 H53.4 Q54.8 12.4 54.9 13.8 L56.9 57 Q57 58.6 55.4 58.6 H3.6 Q2 58.6 2.1 57 L4.1 13.8 Q4.2 12.4 5.6 12.4 Z" fill="#00c08c"/><circle cx="17.4" cy="21" r="3.4" fill="#07966c"/><circle cx="41.4" cy="21" r="3.4" fill="#07966c"/><path d="M17.4 21.6 V27.6 Q17.4 39.4 29.4 39.4 Q41.4 39.4 41.4 27.6 V21.6" fill="none" stroke="#fff" stroke-width="2.8" stroke-linecap="round"/></svg><span class="n">111</span><span class="p">¥10/个</span><span class="kn" style="right:5px">96</span><span class="k" style="right:23px">库</span></div>
<div class="pc" style="left:670px;top:329px"><svg width="58" height="60" viewBox="0 0 58 60"><path d="M13.2 1.4 H46 L44.2 12.6 H14.2 Z" fill="#018b63"/><path d="M13.2 1.4 L17.6 6.6 L4.4 12.6 H11 Z" fill="#12b98a"/><path d="M46 1.4 L41.6 6.6 L54.8 12.6 H48 Z" fill="#12b98a"/><path d="M17.6 6.6 L4.4 12.8 H54.8 L41.6 6.6 Z" fill="#018b63"/><path d="M5.6 12.4 H53.4 Q54.8 12.4 54.9 13.8 L56.9 57 Q57 58.6 55.4 58.6 H3.6 Q2 58.6 2.1 57 L4.1 13.8 Q4.2 12.4 5.6 12.4 Z" fill="#00c08c"/><circle cx="17.4" cy="21" r="3.4" fill="#07966c"/><circle cx="41.4" cy="21" r="3.4" fill="#07966c"/><path d="M17.4 21.6 V27.6 Q17.4 39.4 29.4 39.4 Q41.4 39.4 41.4 27.6 V21.6" fill="none" stroke="#fff" stroke-width="2.8" stroke-linecap="round"/></svg><span class="n">运动鞋</span><span class="s">多规格</span></div>
<div class="pc" style="left:20px;top:451px"><svg width="58" height="60" viewBox="0 0 58 60"><path d="M13.2 1.4 H46 L44.2 12.6 H14.2 Z" fill="#018b63"/><path d="M13.2 1.4 L17.6 6.6 L4.4 12.6 H11 Z" fill="#12b98a"/><path d="M46 1.4 L41.6 6.6 L54.8 12.6 H48 Z" fill="#12b98a"/><path d="M17.6 6.6 L4.4 12.8 H54.8 L41.6 6.6 Z" fill="#018b63"/><path d="M5.6 12.4 H53.4 Q54.8 12.4 54.9 13.8 L56.9 57 Q57 58.6 55.4 58.6 H3.6 Q2 58.6 2.1 57 L4.1 13.8 Q4.2 12.4 5.6 12.4 Z" fill="#00c08c"/><circle cx="17.4" cy="21" r="3.4" fill="#07966c"/><circle cx="41.4" cy="21" r="3.4" fill="#07966c"/><path d="M17.4 21.6 V27.6 Q17.4 39.4 29.4 39.4 Q41.4 39.4 41.4 27.6 V21.6" fill="none" stroke="#fff" stroke-width="2.8" stroke-linecap="round"/></svg><span class="n">长裤</span><span class="s">多规格</span></div>
<div class="pc" style="left:237px;top:451px"><svg width="58" height="60" viewBox="0 0 58 60"><path d="M13.2 1.4 H46 L44.2 12.6 H14.2 Z" fill="#018b63"/><path d="M13.2 1.4 L17.6 6.6 L4.4 12.6 H11 Z" fill="#12b98a"/><path d="M46 1.4 L41.6 6.6 L54.8 12.6 H48 Z" fill="#12b98a"/><path d="M17.6 6.6 L4.4 12.8 H54.8 L41.6 6.6 Z" fill="#018b63"/><path d="M5.6 12.4 H53.4 Q54.8 12.4 54.9 13.8 L56.9 57 Q57 58.6 55.4 58.6 H3.6 Q2 58.6 2.1 57 L4.1 13.8 Q4.2 12.4 5.6 12.4 Z" fill="#00c08c"/><circle cx="17.4" cy="21" r="3.4" fill="#07966c"/><circle cx="41.4" cy="21" r="3.4" fill="#07966c"/><path d="M17.4 21.6 V27.6 Q17.4 39.4 29.4 39.4 Q41.4 39.4 41.4 27.6 V21.6" fill="none" stroke="#fff" stroke-width="2.8" stroke-linecap="round"/></svg><span class="n">衬衫</span><span class="s">多规格</span></div>
<div class="pc" style="left:454px;top:451px;width:196px"><svg width="58" height="60" viewBox="0 0 58 60"><path d="M13.2 1.4 H46 L44.2 12.6 H14.2 Z" fill="#018b63"/><path d="M13.2 1.4 L17.6 6.6 L4.4 12.6 H11 Z" fill="#12b98a"/><path d="M46 1.4 L41.6 6.6 L54.8 12.6 H48 Z" fill="#12b98a"/><path d="M17.6 6.6 L4.4 12.8 H54.8 L41.6 6.6 Z" fill="#018b63"/><path d="M5.6 12.4 H53.4 Q54.8 12.4 54.9 13.8 L56.9 57 Q57 58.6 55.4 58.6 H3.6 Q2 58.6 2.1 57 L4.1 13.8 Q4.2 12.4 5.6 12.4 Z" fill="#00c08c"/><circle cx="17.4" cy="21" r="3.4" fill="#07966c"/><circle cx="41.4" cy="21" r="3.4" fill="#07966c"/><path d="M17.4 21.6 V27.6 Q17.4 39.4 29.4 39.4 Q41.4 39.4 41.4 27.6 V21.6" fill="none" stroke="#fff" stroke-width="2.8" stroke-linecap="round"/></svg><span class="n">多多多</span><span class="s">多规格</span></div>
<div class="pc" style="left:670px;top:451px"><svg width="58" height="60" viewBox="0 0 58 60"><path d="M13.2 1.4 H46 L44.2 12.6 H14.2 Z" fill="#018b63"/><path d="M13.2 1.4 L17.6 6.6 L4.4 12.6 H11 Z" fill="#12b98a"/><path d="M46 1.4 L41.6 6.6 L54.8 12.6 H48 Z" fill="#12b98a"/><path d="M17.6 6.6 L4.4 12.8 H54.8 L41.6 6.6 Z" fill="#018b63"/><path d="M5.6 12.4 H53.4 Q54.8 12.4 54.9 13.8 L56.9 57 Q57 58.6 55.4 58.6 H3.6 Q2 58.6 2.1 57 L4.1 13.8 Q4.2 12.4 5.6 12.4 Z" fill="#00c08c"/><circle cx="17.4" cy="21" r="3.4" fill="#07966c"/><circle cx="41.4" cy="21" r="3.4" fill="#07966c"/><path d="M17.4 21.6 V27.6 Q17.4 39.4 29.4 39.4 Q41.4 39.4 41.4 27.6 V21.6" fill="none" stroke="#fff" stroke-width="2.8" stroke-linecap="round"/></svg><span class="n">测试1127</span><span class="p">¥0/个</span><span class="kn" style="right:5px">0</span><span class="k" style="right:15px">库</span></div>
<div class="abs" style="left:0;top:645px;width:883px;height:2px;background:#eee"></div>
<div class="abs" style="left:20px;top:662px;width:186px;height:34px;background:#f0f0f0"></div>
<div class="abs" style="left:30px;top:670px;width:1px;height:18px;background:#222"></div>
<div class="t" style="left:30px;top:669px;color:#999">条码/付款码</div>
<svg class="abs" style="left:168px;top:670px" width="28" height="18" viewBox="0 0 28 18"><rect x="1" y="1" width="26" height="16" rx="2" fill="none" stroke="#10c08d" stroke-width="2"/><g fill="#10c08d"><rect x="4.9" y="4.9" width="3.1" height="2.3" rx=".5"/><rect x="9.8" y="4.9" width="3.2" height="2.3" rx=".5"/><rect x="15" y="4.9" width="3" height="2.3" rx=".5"/><rect x="20" y="4.9" width="3" height="2.3" rx=".5"/><rect x="4.9" y="10.9" width="3.1" height="2.3" rx=".5"/><rect x="9.8" y="10.9" width="8.2" height="2.3" rx=".5"/><rect x="20" y="10.9" width="3" height="2.3" rx=".5"/></g></svg>
<div class="abs" style="left:206px;top:662px;width:74px;height:34px;background:#00c08c;border-radius:0 3px 3px 0;color:#fff;font-size:14px;font-weight:500;line-height:34px;text-align:center">搜索</div>
<div class="btn" style="left:300px;top:659px;width:113px;height:40px;line-height:40px;font-size:14px">快速收银[F6]</div>
<div class="btn" style="left:417px;top:659px;width:121px;height:40px;line-height:40px;font-size:14px">计次项目[F10]</div>
<svg class="abs" style="left:633px;top:663px" width="90" height="34" viewBox="0 0 90 34"><path d="M17.6 1.4 H85 Q87.6 1.4 87.6 4 V29.8 Q87.6 32.4 85 32.4 H17.6 L1.6 17 Z" fill="#fff" stroke="#1cc59a" stroke-width="1.2" stroke-linejoin="round"/></svg>
<div class="t" style="left:650px;width:70px;text-align:center;top:671px;color:#1cc59a">上一页</div>
<div class="t" style="left:726px;width:60px;text-align:center;top:670px">3/12</div>
<svg class="abs" style="left:789.4px;top:663px" width="90" height="34" viewBox="0 0 90 34"><path d="M72.4 1.4 H5 Q2.4 1.4 2.4 4 V29.8 Q2.4 32.4 5 32.4 H72.4 L88.4 17 Z" fill="#fff" stroke="#1cc59a" stroke-width="1.2" stroke-linejoin="round"/></svg>
<div class="t" style="left:792px;width:70px;text-align:center;top:671px;color:#1cc59a">下一页</div>
</div>
</div>
</body>
</html>
